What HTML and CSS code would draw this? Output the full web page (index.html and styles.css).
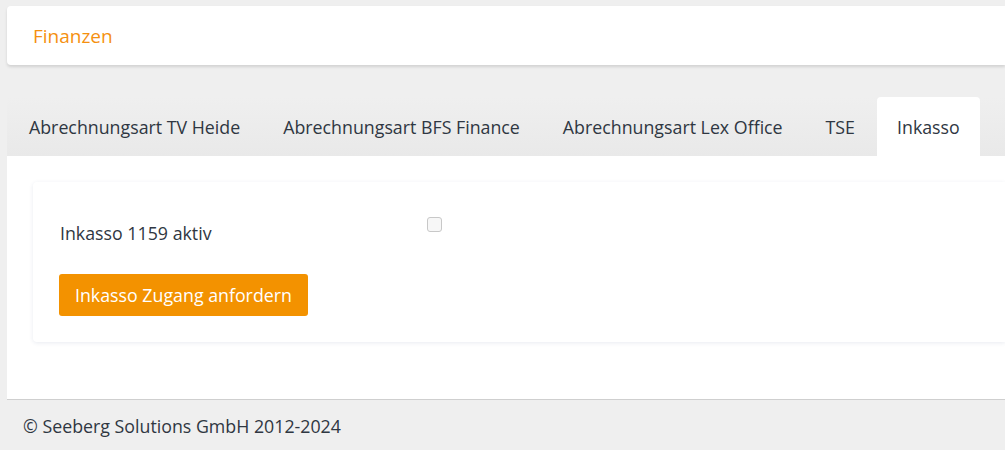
FILE: index.html
```html
<!DOCTYPE html>
<html lang="de">
<head>
<meta charset="utf-8">
<title>Finanzen</title>
<link rel="stylesheet" href="styles.css">
</head>
<body>
<div class="page">
  <header class="title-card">
    <h1 class="title">Finanzen</h1>
  </header>
  <nav class="tabs">
    <div class="tab">Abrechnungsart TV Heide</div>
    <div class="tab">Abrechnungsart BFS Finance</div>
    <div class="tab">Abrechnungsart Lex Office</div>
    <div class="tab">TSE</div>
    <div class="tab active">Inkasso</div>
  </nav>
  <section class="panel">
    <div class="card">
      <div class="row">
        <label class="label" for="inkasso">Inkasso 1159 aktiv</label>
        <input class="check" type="checkbox" id="inkasso">
      </div>
      <button class="btn" type="button">Inkasso Zugang anfordern</button>
    </div>
  </section>
  <footer class="footer">© Seeberg Solutions GmbH 2012-2024</footer>
</div>
</body>
</html>
```
FILE: styles.css
```css
html, body {
  margin: 0;
  padding: 0;
  background: #efefef;
  overflow: hidden;
}
body {
  font-family: "Open Sans", "Noto Sans", sans-serif;
  color: #2f3742;
  height: 450px;
}
.page {
  padding: 6px 0 0 7px;
}
.title-card {
  background: #fff;
  border-radius: 4px 0 0 4px;
  height: 59px;
  box-shadow: 0 2px 3px rgba(0,0,0,0.12);
  display: flex;
  align-items: center;
  padding-left: 26px;
}
.title {
  margin: 0;
  font-size: 19px;
  font-weight: 400;
  color: #f5900f;
}
.tabs {
  margin-top: 32px;
  display: flex;
  gap: 1px;
  padding-left: 1px;
  height: 59px;
  background: linear-gradient(#efefef, #e9e9e9);
}
.tab {
  padding: 0 21px;
  display: flex;
  align-items: center;
  font-size: 17.8px;
  white-space: nowrap;
  border-radius: 4px 4px 0 0;
}
.tab.active {
  background: #fff;
  padding: 0 20px;
}
.panel {
  background: #fff;
  border-bottom: 1px solid #cfcfcf;
  padding: 26px 0 57px 26px;
}
.card {
  background: #fff;
  border-radius: 4px 0 0 4px;
  box-shadow: 0 1px 4px rgba(40,60,120,0.10);
  padding: 32px 0 26px 26px;
}
.row {
  display: flex;
  align-items: flex-start;
  height: 60px;
}
.label {
  font-size: 17.8px;
  width: 367px;
  padding-left: 1px;
  margin-top: 7px;
}
.check {
  margin: 3px 0 0 0;
  width: 15px;
  height: 15px;
  appearance: none;
  border: 1px solid #c8c8c8;
  border-radius: 3px;
  background: #f7f7f7;
}
.btn {
  font-family: inherit;
  font-size: 17.8px;
  color: #fff;
  background: #f39200;
  border: none;
  border-radius: 3px;
  height: 42px;
  padding: 0 16px;
  cursor: pointer;
}
.footer {
  padding: 14px 0 0 16px;
  font-size: 17.8px;
}
```
